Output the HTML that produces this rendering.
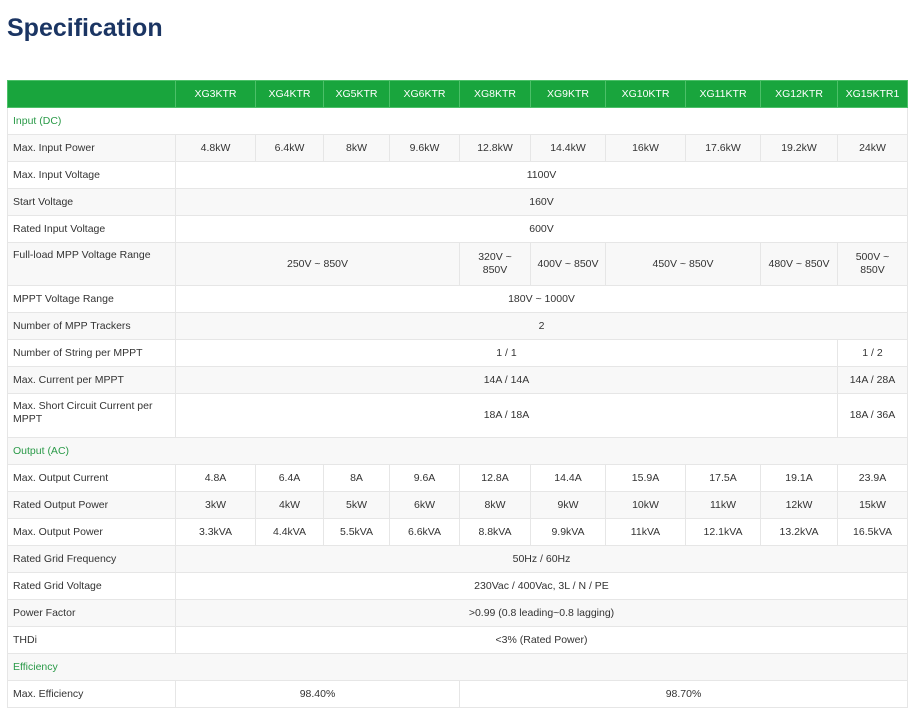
<!DOCTYPE html>
<html><head><meta charset="utf-8"><style>
body{margin:0;background:#fff;width:921px;height:700px;overflow:hidden;font-family:"Liberation Sans",Arial,sans-serif;}
h1{position:absolute;left:7px;top:14px;margin:0;font-size:25px;font-weight:bold;color:#1b3563;}
table{position:absolute;left:7px;top:80px;width:900px;border-collapse:collapse;table-layout:fixed;font-size:10.5px;color:#333;}
td{border:1px solid #e6e6e6;text-align:center;padding:0 4px;height:26px;line-height:13px;}
td:first-child{text-align:left;padding-left:5px;}
tr.h td{background:#19a53d;color:#fff;border-color:#4cc068;height:26px;}
tr.g td{background:#f8f8f8;}
tr.s td{color:#2a9a48;}
tr.t td{height:42px;}
tr.t td:first-child{vertical-align:top;padding-top:6px;height:36px;}
tr.t2 td{height:43px;}
tr.t2 td:first-child{vertical-align:top;padding-top:6px;height:37px;}
</style></head><body>
<h1>Specification</h1>
<table>
<colgroup><col style="width:168px"><col style="width:80px"><col style="width:68px"><col style="width:66px"><col style="width:70px"><col style="width:71px"><col style="width:75px"><col style="width:80px"><col style="width:75px"><col style="width:77px"><col style="width:70px"></colgroup>
<tr class="h"><td></td><td>XG3KTR</td><td>XG4KTR</td><td>XG5KTR</td><td>XG6KTR</td><td>XG8KTR</td><td>XG9KTR</td><td>XG10KTR</td><td>XG11KTR</td><td>XG12KTR</td><td>XG15KTR1</td></tr>
<tr class="s"><td colspan="11">Input (DC)</td></tr>
<tr class="g"><td>Max. Input Power</td><td>4.8kW</td><td>6.4kW</td><td>8kW</td><td>9.6kW</td><td>12.8kW</td><td>14.4kW</td><td>16kW</td><td>17.6kW</td><td>19.2kW</td><td>24kW</td></tr>
<tr><td>Max. Input Voltage</td><td colspan="10">1100V</td></tr>
<tr class="g"><td>Start Voltage</td><td colspan="10">160V</td></tr>
<tr><td>Rated Input Voltage</td><td colspan="10">600V</td></tr>
<tr class="g t"><td>Full-load MPP Voltage Range</td><td colspan="4">250V ~ 850V</td><td>320V ~<br>850V</td><td>400V ~ 850V</td><td colspan="2">450V ~ 850V</td><td>480V ~ 850V</td><td>500V ~<br>850V</td></tr>
<tr><td>MPPT Voltage Range</td><td colspan="10">180V ~ 1000V</td></tr>
<tr class="g"><td>Number of MPP Trackers</td><td colspan="10">2</td></tr>
<tr><td>Number of String per MPPT</td><td colspan="9">1 / 1</td><td>1 / 2</td></tr>
<tr class="g"><td>Max. Current per MPPT</td><td colspan="9">14A / 14A</td><td>14A / 28A</td></tr>
<tr class="t2"><td>Max. Short Circuit Current per MPPT</td><td colspan="9">18A / 18A</td><td>18A / 36A</td></tr>
<tr class="g s"><td colspan="11">Output (AC)</td></tr>
<tr><td>Max. Output Current</td><td>4.8A</td><td>6.4A</td><td>8A</td><td>9.6A</td><td>12.8A</td><td>14.4A</td><td>15.9A</td><td>17.5A</td><td>19.1A</td><td>23.9A</td></tr>
<tr class="g"><td>Rated Output Power</td><td>3kW</td><td>4kW</td><td>5kW</td><td>6kW</td><td>8kW</td><td>9kW</td><td>10kW</td><td>11kW</td><td>12kW</td><td>15kW</td></tr>
<tr><td>Max. Output Power</td><td>3.3kVA</td><td>4.4kVA</td><td>5.5kVA</td><td>6.6kVA</td><td>8.8kVA</td><td>9.9kVA</td><td>11kVA</td><td>12.1kVA</td><td>13.2kVA</td><td>16.5kVA</td></tr>
<tr class="g"><td>Rated Grid Frequency</td><td colspan="10">50Hz / 60Hz</td></tr>
<tr><td>Rated Grid Voltage</td><td colspan="10">230Vac / 400Vac, 3L / N / PE</td></tr>
<tr class="g"><td>Power Factor</td><td colspan="10">&gt;0.99 (0.8 leading~0.8 lagging)</td></tr>
<tr><td>THDi</td><td colspan="10">&lt;3% (Rated Power)</td></tr>
<tr class="g s"><td colspan="11">Efficiency</td></tr>
<tr><td>Max. Efficiency</td><td colspan="4">98.40%</td><td colspan="6">98.70%</td></tr>
</table>
</body></html>
